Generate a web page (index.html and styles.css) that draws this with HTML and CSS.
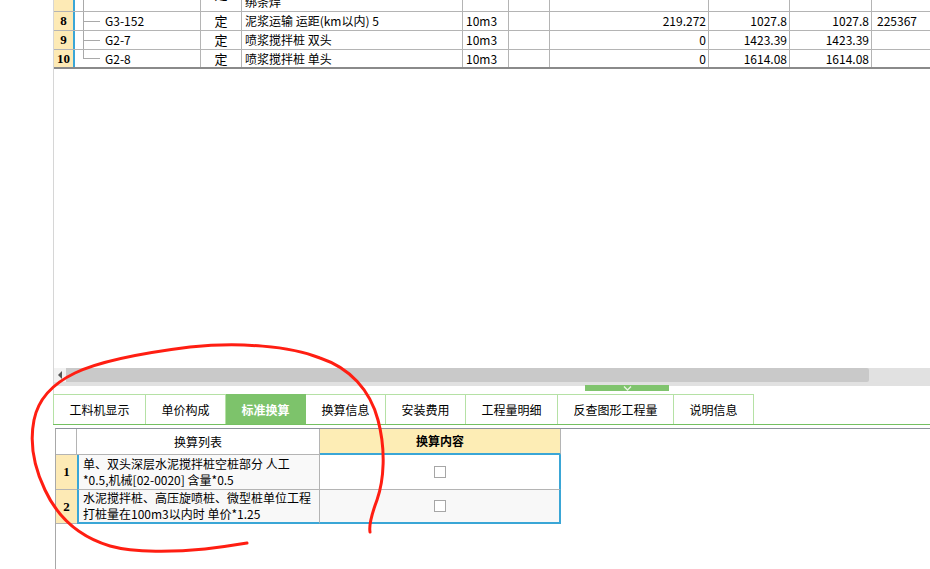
FILE: index.html
```html
<!DOCTYPE html>
<html lang="zh-CN">
<head>
    <meta charset="UTF-8">
    <title>标准换算</title>
    <link rel="stylesheet" href="styles.css">
</head>
<body>
<div class="page">
    <div class="upper">
        <div class="grid">
            <div class="row partial">
                <div class="cell rn"></div>
                <div class="cell code"><span class="branch pass"></span></div>
                <div class="cell ding">定</div>
                <div class="cell name low">绑条焊</div>
                <div class="cell unit"></div>
                <div class="cell blank"></div>
                <div class="cell qty"></div>
                <div class="cell price"></div>
                <div class="cell total"></div>
                <div class="cell last"></div>
            </div>
            <div class="row">
                <div class="cell rn">8</div>
                <div class="cell code"><span class="branch"></span><span class="code-text">G3-152</span></div>
                <div class="cell ding">定</div>
                <div class="cell name">泥浆运输 运距(km以内) 5</div>
                <div class="cell unit">10m3</div>
                <div class="cell blank"></div>
                <div class="cell qty">219.272</div>
                <div class="cell price">1027.8</div>
                <div class="cell total">1027.8</div>
                <div class="cell last">225367</div>
            </div>
            <div class="row">
                <div class="cell rn">9</div>
                <div class="cell code"><span class="branch"></span><span class="code-text">G2-7</span></div>
                <div class="cell ding">定</div>
                <div class="cell name">喷浆搅拌桩 双头</div>
                <div class="cell unit">10m3</div>
                <div class="cell blank"></div>
                <div class="cell qty">0</div>
                <div class="cell price">1423.39</div>
                <div class="cell total">1423.39</div>
                <div class="cell last"></div>
            </div>
            <div class="row end">
                <div class="cell rn">10</div>
                <div class="cell code"><span class="branch end"></span><span class="code-text">G2-8</span></div>
                <div class="cell ding">定</div>
                <div class="cell name">喷浆搅拌桩 单头</div>
                <div class="cell unit">10m3</div>
                <div class="cell blank"></div>
                <div class="cell qty">0</div>
                <div class="cell price">1614.08</div>
                <div class="cell total">1614.08</div>
                <div class="cell last"></div>
            </div>
        </div>

        <div class="fill"></div>

        <div class="hscroll">
            <span class="arrow-btn"><span class="arrow"></span></span>
            <span class="thumb"></span>
        </div>
        <div class="splitter">
            <span class="grip">
                <svg width="9" height="5" viewBox="0 0 9 5"><polyline points="1,0.5 4.5,4 8,0.5" fill="none" stroke="#e8f5e3" stroke-width="1.4"/></svg>
            </span>
        </div>
    </div>

    <div class="tabs">
        <div class="tab first">工料机显示</div>
        <div class="tab">单价构成</div>
        <div class="tab active">标准换算</div>
        <div class="tab">换算信息</div>
        <div class="tab">安装费用</div>
        <div class="tab">工程量明细</div>
        <div class="tab">反查图形工程量</div>
        <div class="tab">说明信息</div>
    </div>

    <div class="calc">
        <div class="crow head">
            <div class="ccell crn"></div>
            <div class="ccell c1">换算列表</div>
            <div class="ccell c2">换算内容</div>
        </div>
        <div class="crow">
            <div class="ccell crn">1</div>
            <div class="ccell c1">单、双头深层水泥搅拌桩空桩部分 人工<br>*0.5,机械[02-0020] 含量*0.5</div>
            <div class="ccell c2"><span class="check"></span></div>
        </div>
        <div class="crow bottom">
            <div class="ccell crn">2</div>
            <div class="ccell c1">水泥搅拌桩、高压旋喷桩、微型桩单位工程<br>打桩量在100m3以内时 单价*1.25</div>
            <div class="ccell c2"><span class="check"></span></div>
        </div>
    </div>

    <svg class="mark" width="930" height="569" viewBox="0 0 930 569">
        <path d="M247,543 C235,545 222,547 205,549 C175,552 135,553 110,546 C80,537 58,518 45,490 C33,465 30,440 34,420 C38,400 52,384 75,373 C100,361 150,352 190,347 C240,342 290,346 320,358 C350,368 370,390 378,420 C386,450 384,480 377,500 C371,516 369,526 370,532" fill="none" stroke="#ff1e12" stroke-width="3" stroke-linecap="round" stroke-linejoin="round"/>
    </svg>
</div>
</body>
</html>
```

FILE: styles.css
```css
html, body {
    margin: 0;
    padding: 0;
    background: #fff;
}

body {
    font-family: "Noto Sans CJK SC", "Liberation Sans", sans-serif;
    font-size: 12px;
    color: #000;
}

.page {
    position: relative;
    width: 930px;
    height: 569px;
    box-sizing: border-box;
    padding-left: 53px;
    display: flex;
    flex-direction: column;
    overflow: hidden;
}

/* upper grid */
.upper {
    height: 394px;
    border-left: 1px solid #d6d6d6;
    display: flex;
    flex-direction: column;
}

.grid {
    overflow: hidden;
    border-bottom: 2px solid #8a8a8a;
}

.row {
    display: flex;
    height: 19px;
    box-sizing: border-box;
    border-bottom: 1px solid #b4b4b4;
}

.row.partial {
    height: 35px;
    margin-top: -23px;
}

.row.end {
    height: 17px;
    border-bottom: none;
}

.cell {
    flex: none;
    box-sizing: border-box;
    display: flex;
    align-items: center;
    border-right: 1px solid #b4b4b4;
    padding: 0 3px;
    white-space: nowrap;
    overflow: hidden;
    line-height: 16px;
}

.rn {
    width: 21px;
    background: #fdeab5;
    border-right: 2px solid #3aa6d6;
    justify-content: center;
    font-family: "Liberation Serif", serif;
    font-weight: bold;
    font-size: 13px;
    padding: 0;
}

.code {
    width: 126px;
    padding: 0;
    align-items: stretch;
}

.branch {
    flex: none;
    width: 17px;
    margin-left: 8px;
    background-image: linear-gradient(#a9a9a9, #a9a9a9), linear-gradient(#a9a9a9, #a9a9a9);
    background-repeat: no-repeat;
    background-position: left top, left center;
    background-size: 1px 100%, 100% 1px;
}

.branch.end {
    background-size: 1px 50%, 100% 1px;
}

.branch.pass {
    background-size: 1px 100%, 0 0;
}

.code-text {
    align-self: center;
    margin-left: 5px;
}

.ding {
    width: 41px;
    justify-content: center;
    font-size: 13px;
}

.name {
    width: 221px;
}

.name.low {
    align-items: flex-end;
    padding-bottom: 1px;
}

.unit {
    width: 46px;
}

.blank {
    width: 41px;
}

.qty {
    width: 159px;
    justify-content: flex-end;
    padding-right: 2px;
}

.price {
    width: 81px;
    justify-content: flex-end;
    padding-right: 2px;
}

.total {
    width: 82px;
    justify-content: flex-end;
    padding-right: 2px;
}

.last {
    width: 100px;
    border-right: none;
    padding-left: 5px;
}

.fill {
    flex: 1;
}

/* scrollbar + splitter */
.hscroll {
    height: 18px;
    background: #e1e1e1;
    display: flex;
    align-items: flex-start;
}

.arrow-btn {
    width: 12px;
    height: 14px;
    background: #f2f2f2;
    display: flex;
    align-items: center;
    justify-content: center;
}

.arrow {
    width: 0;
    height: 0;
    border-top: 4px solid transparent;
    border-bottom: 4px solid transparent;
    border-right: 4px solid #555;
}

.thumb {
    width: 803px;
    height: 14px;
    background: #c9c9c9;
    border-radius: 0 2px 2px 0;
}

.splitter {
    height: 8px;
}

.grip {
    display: flex;
    justify-content: center;
    align-items: flex-start;
    width: 84px;
    height: 6px;
    margin-top: -1px;
    margin-left: 531px;
    background: #80c46e;
}

.grip svg {
    display: block;
    margin-top: 1px;
}

/* tabs */
.tabs {
    display: flex;
    height: 31px;
    box-sizing: border-box;
    border-bottom: 1px solid #74c062;
}

.tab {
    box-sizing: border-box;
    height: 30px;
    padding: 0 15.5px;
    display: flex;
    align-items: center;
    border-top: 1px solid #b5e1a5;
    border-right: 1px solid #b5e1a5;
    white-space: nowrap;
}

.tab.first {
    border-left: 1px solid #b5e1a5;
}

.tab.active {
    background: #7dc36b;
    border-color: #7dc36b;
    color: #fff;
    font-weight: bold;
}

/* calc table */
.calc {
    flex: 1;
    margin-top: 3px;
    margin-left: 2px;
    border-top: 1px solid #8c939c;
    border-left: 1px solid #a8a8a8;
}

.crow {
    display: flex;
    height: 35px;
}

.crow.head {
    height: 26px;
}

.crow.bottom {
    height: 34px;
}

.ccell {
    flex: none;
    box-sizing: border-box;
    display: flex;
    align-items: center;
    border-bottom: 1px solid #b4b4b4;
    line-height: 16px;
    white-space: nowrap;
}

.crn {
    width: 21px;
    justify-content: center;
    background: #fdeab5;
    font-family: "Liberation Serif", serif;
    font-weight: bold;
    font-size: 13px;
}

.c1 {
    width: 243px;
    padding: 0 4px;
    background: #f9f9f9;
    border-left: 2px solid #3aa6d6;
    border-right: 1px solid #b4b4b4;
}

.c2 {
    width: 241px;
    justify-content: center;
    background: #fff;
    border-right: 2px solid #3aa6d6;
}

.head .crn {
    background: #fff;
    border-right: 1px solid #b4b4b4;
}

.head .c1 {
    justify-content: center;
    background: #fff;
    border-left: none;
}

.head .c2 {
    background: #fdedb5;
    font-weight: bold;
    border-right: 1px solid #b4b4b4;
    border-bottom: 2px solid #3aa6d6;
}

.bottom .c1,
.bottom .c2 {
    border-bottom: 2px solid #3aa6d6;
    background: #f8f8f8;
}

.check {
    width: 12px;
    height: 12px;
    box-sizing: border-box;
    border: 1px solid #a6a6a6;
    background: #fff;
}

/* hand-drawn annotation */
.mark {
    position: absolute;
    left: 0;
    top: 0;
    pointer-events: none;
}
```
